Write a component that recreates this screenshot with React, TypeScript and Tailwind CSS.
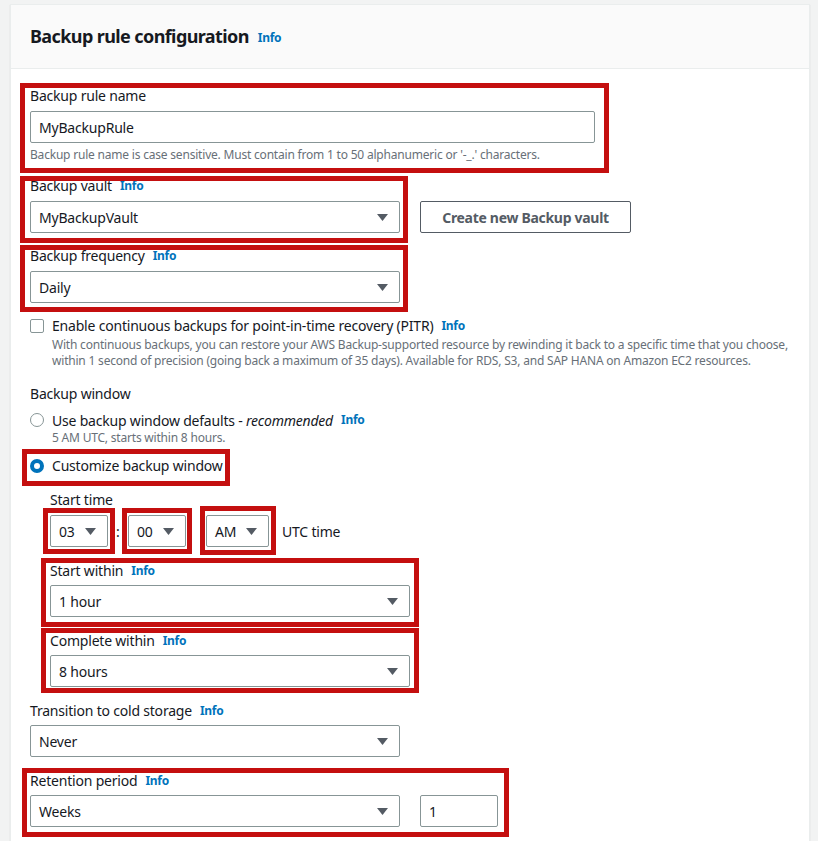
import React from "react";

const FONT = "font-['Noto_Sans',_'Open_Sans',_sans-serif]";

function Info() {
  return <span className="ml-[8px] text-[12px] font-bold tracking-[-0.3px] text-[#0073bb]">Info</span>;
}

function Label({ text, info, className = "" }: { text: string; info?: boolean; className?: string }) {
  return (
    <div className={`flex items-center h-[20px] text-[14px] leading-[20px] tracking-[-0.2px] text-[#16191f] ${className}`}>
      <span>{text}</span>
      {info && <Info />}
    </div>
  );
}

function Caret() {
  return (
    <svg width="11" height="7" viewBox="0 0 11 7" className="shrink-0">
      <path d="M0 0 L11 0 L5.5 7 Z" fill="#545b64" />
    </svg>
  );
}

function Select({ value, className = "" }: { value: string; className?: string }) {
  return (
    <div
      className={`flex items-center justify-between h-[32px] border border-[#879596] rounded-[2px] bg-white pl-[8px] pr-[11px] text-[14px] tracking-[-0.2px] text-[#16191f] ${className}`}
    >
      <span>{value}</span>
      <Caret />
    </div>
  );
}

// red annotation boxes drawn over the form
const marks = [
  { x: 20, y: 83, w: 589, h: 90 },
  { x: 20, y: 176, w: 388, h: 67 },
  { x: 20, y: 245, w: 388, h: 67 },
  { x: 22, y: 449, w: 208, h: 37 },
  { x: 43, y: 508, w: 72, h: 46 },
  { x: 122, y: 508, w: 70, h: 46 },
  { x: 200, y: 506, w: 76, h: 49 },
  { x: 41, y: 558, w: 378, h: 69 },
  { x: 41, y: 628, w: 378, h: 65 },
  { x: 22, y: 768, w: 487, h: 69 },
];

export default function App() {
  return (
    <div className={`relative w-[818px] h-[841px] overflow-hidden bg-[#f2f3f3] pt-[4px] pl-[10px] pr-[8px] ${FONT}`}>
      <div className="h-[900px] bg-white border border-[#eaeded] shadow-[0_1px_1px_0_rgba(0,28,36,0.15)]">
        <div className="h-[64px] bg-[#fafafa] border-b border-[#eaeded] flex items-center px-[19px]">
          <h2 className="text-[18px] font-bold tracking-[-0.6px] text-[#16191f]">Backup rule configuration</h2>
          <span className="ml-[9px] mt-[2px] text-[12px] font-bold tracking-[-0.3px] text-[#0073bb]">Info</span>
        </div>

        <div className="px-[19px] pt-[17px]">
          <Label text="Backup rule name" />
          <div className="mt-[5px] w-[565px] h-[32px] border border-[#879596] rounded-[2px] flex items-center pl-[8px] text-[14px] tracking-[-0.2px] text-[#16191f]">
            MyBackupRule
          </div>
          <div className="mt-[4px] text-[12px] leading-[16px] tracking-[-0.2px] text-[#687078]">
            Backup rule name is case sensitive. Must contain from 1 to 50 alphanumeric or '-_.' characters.
          </div>

          <Label text="Backup vault" info className="mt-[13px]" />
          <div className="mt-[5px] flex items-center gap-[20px]">
            <Select value="MyBackupVault" className="w-[370px]" />
            <button className="w-[211px] h-[32px] border border-[#545b64] rounded-[2px] text-[14px] font-bold tracking-[-0.3px] text-[#545b64] bg-white">
              Create new Backup vault
            </button>
          </div>

          <Label text="Backup frequency" info className="mt-[13px]" />
          <Select value="Daily" className="mt-[5px] w-[370px]" />

          <div className="mt-[13px] flex">
            <div className="mt-[3px] w-[14px] h-[14px] border-[1.5px] border-[#879596] rounded-[2px] bg-white shrink-0" />
            <div className="ml-[8px]">
              <Label text="Enable continuous backups for point-in-time recovery (PITR)" info />
              <div className="mt-[1px] text-[12px] leading-[16px] tracking-[-0.2px] text-[#687078]">
                With continuous backups, you can restore your AWS Backup-supported resource by rewinding it back to a specific time that you choose,
                <br />
                within 1 second of precision (going back a maximum of 35 days). Available for RDS, S3, and SAP HANA on Amazon EC2 resources.
              </div>
            </div>
          </div>

          <Label text="Backup window" className="mt-[15px]" />

          <div className="mt-[6px] flex">
            <div className="mt-[3px] w-[14px] h-[14px] border-[1.5px] border-[#879596] rounded-full bg-white shrink-0" />
            <div className="ml-[8px]">
              <div className="flex items-center h-[20px] text-[14px] tracking-[-0.2px] text-[#16191f]">
                <span>
                  Use backup window defaults - <i>recommended</i>
                </span>
                <Info />
              </div>
              <div className="text-[12px] leading-[16px] tracking-[-0.2px] text-[#687078]">5 AM UTC, starts within 8 hours.</div>
            </div>
          </div>

          <div className="mt-[10px] flex">
            <div className="mt-[3px] w-[14px] h-[14px] border-[4px] border-[#0073bb] rounded-full bg-white shrink-0" />
            <Label text="Customize backup window" className="ml-[8px]" />
          </div>

          <div className="pl-[20px]">
            <Label text="Start time" className="mt-[14px]" />
            <div className="mt-[5px] flex items-center">
              <Select value="03" className="w-[58px]" />
              <span className="w-[20px] text-center text-[14px] text-[#16191f]">:</span>
              <Select value="00" className="w-[58px]" />
              <Select value="AM" className="ml-[20px] w-[63px]" />
              <span className="ml-[13px] text-[14px] tracking-[-0.2px] text-[#16191f]">UTC time</span>
            </div>

            <Label text="Start within" info className="mt-[14px]" />
            <Select value="1 hour" className="mt-[4px] w-[360px]" />

            <Label text="Complete within" info className="mt-[14px]" />
            <Select value="8 hours" className="mt-[4px] w-[360px]" />
          </div>

          <Label text="Transition to cold storage" info className="mt-[14px]" />
          <Select value="Never" className="mt-[4px] w-[370px]" />

          <Label text="Retention period" info className="mt-[14px]" />
          <div className="mt-[4px] flex items-center gap-[20px]">
            <Select value="Weeks" className="w-[370px]" />
            <div className="w-[78px] h-[32px] border border-[#879596] rounded-[2px] flex items-center pl-[8px] text-[14px] text-[#16191f]">
              1
            </div>
          </div>
        </div>
      </div>

      {marks.map((m, i) => (
        <div
          key={i}
          className="absolute border-[5px] border-[#c40f0f] pointer-events-none"
          style={{ left: m.x, top: m.y, width: m.w, height: m.h }}
        />
      ))}
    </div>
  );
}
